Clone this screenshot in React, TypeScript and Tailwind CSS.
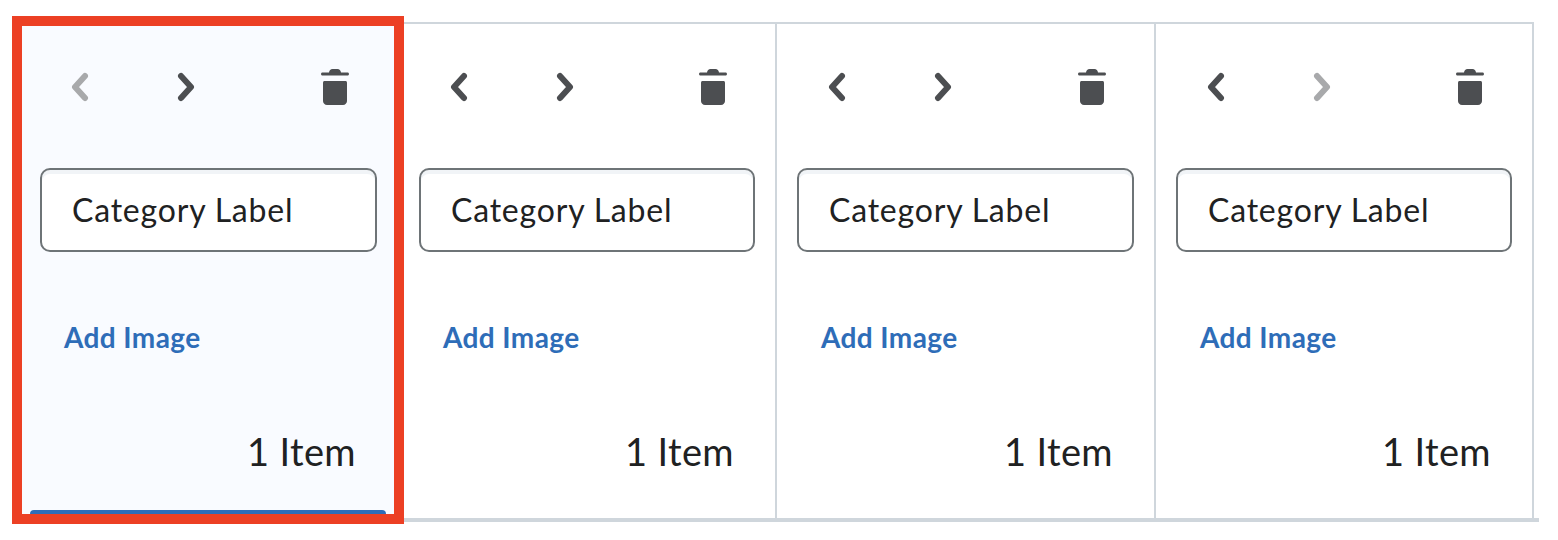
function Chevron({ dir, disabled }: { dir: "left" | "right"; disabled?: boolean }) {
  return (
    <svg width="18" height="30" viewBox="0 0 18 30" fill="none" className={disabled ? "text-[#a8a9ab]" : "text-[#4c4e51]"}>
      <path
        d={dir === "left" ? "M14 4 L4 15 L14 26" : "M4 4 L14 15 L4 26"}
        stroke="currentColor"
        strokeWidth="6"
        strokeLinecap="round"
        strokeLinejoin="round"
      />
    </svg>
  );
}

function Trash() {
  return (
    <svg width="28" height="36" viewBox="0 0 28 36" className="text-[#4c4e51]">
      <path
        fill="currentColor"
        d="M8 3.5 C8.3 1.2 9.6 0 11.5 0 H16.5 C18.4 0 19.7 1.2 20 3.5 H26.5 C27.4 3.5 28 4.1 28 5 C28 5.9 27.4 6.5 26.5 6.5 H1.5 C0.6 6.5 0 5.9 0 5 C0 4.1 0.6 3.5 1.5 3.5 Z"
      />
      <path
        fill="currentColor"
        d="M3.5 12 H24.5 C25.3 12 26 12.7 26 13.5 V32 C26 34.2 24.2 36 22 36 H6 C3.8 36 2 34.2 2 32 V13.5 C2 12.7 2.7 12 3.5 12 Z"
      />
    </svg>
  );
}

function CategoryBody({ prevDisabled, nextDisabled }: { prevDisabled?: boolean; nextDisabled?: boolean }) {
  return (
    <>
      <div className="flex items-center h-9 -ml-[13px]">
        <div className="w-[105px] flex justify-center">
          <Chevron dir="left" disabled={prevDisabled} />
        </div>
        <div className="w-[108px] flex justify-center">
          <Chevron dir="right" disabled={nextDisabled} />
        </div>
        <div className="ml-auto mr-7 flex">
          <Trash />
        </div>
      </div>

      <div className="mt-[63px] h-[84px] flex items-center bg-white border-2 border-[#6e7477] rounded-[10px] pl-[30px] text-[32px] tracking-[0.8px] text-[#202122] shadow-[inset_0_4px_0_#f1f4f7]">
        Category Label
      </div>

      <div className="mt-[67px] ml-6 text-[28px] tracking-[0.4px] leading-9 font-bold text-[#2e6db8]">Add Image</div>

      <div className="mt-[74px] mr-[21px] text-right text-[38px] tracking-[0.4px] leading-11 text-[#202122]">1 Item</div>
    </>
  );
}

export default function App() {
  return (
    <div className="w-[1558px] h-[540px] bg-white overflow-hidden flex pl-3 pt-4 font-['Lato',sans-serif]">
      <div className="w-[392px] h-[508px] border-10 border-[#ec4024] bg-[#f9fbff] flex flex-col pt-[43px] pl-[18px] pr-[17px]">
        <CategoryBody prevDisabled />
        <div className="mt-auto -ml-2.5 -mr-[9px] h-1 bg-[#2e6db8] rounded-t-md" />
      </div>

      <div className="w-[1135px] h-[500px] mt-1.5 flex flex-col">
        <div className="w-[1130px] h-[496px] flex border-t-2 border-[#cfd6dc]">
          <div className="w-[373px] border-r-2 border-[#cfd6dc] pt-[45px] pl-[15px] pr-5">
            <CategoryBody />
          </div>
          <div className="w-[379px] border-r-2 border-[#cfd6dc] pt-[45px] pl-5 pr-5">
            <CategoryBody />
          </div>
          <div className="w-[378px] border-r-2 border-[#cfd6dc] pt-[45px] pl-5 pr-5">
            <CategoryBody nextDisabled />
          </div>
        </div>
        <div className="h-1 bg-[#cfd6dc]" />
      </div>
    </div>
  );
}
